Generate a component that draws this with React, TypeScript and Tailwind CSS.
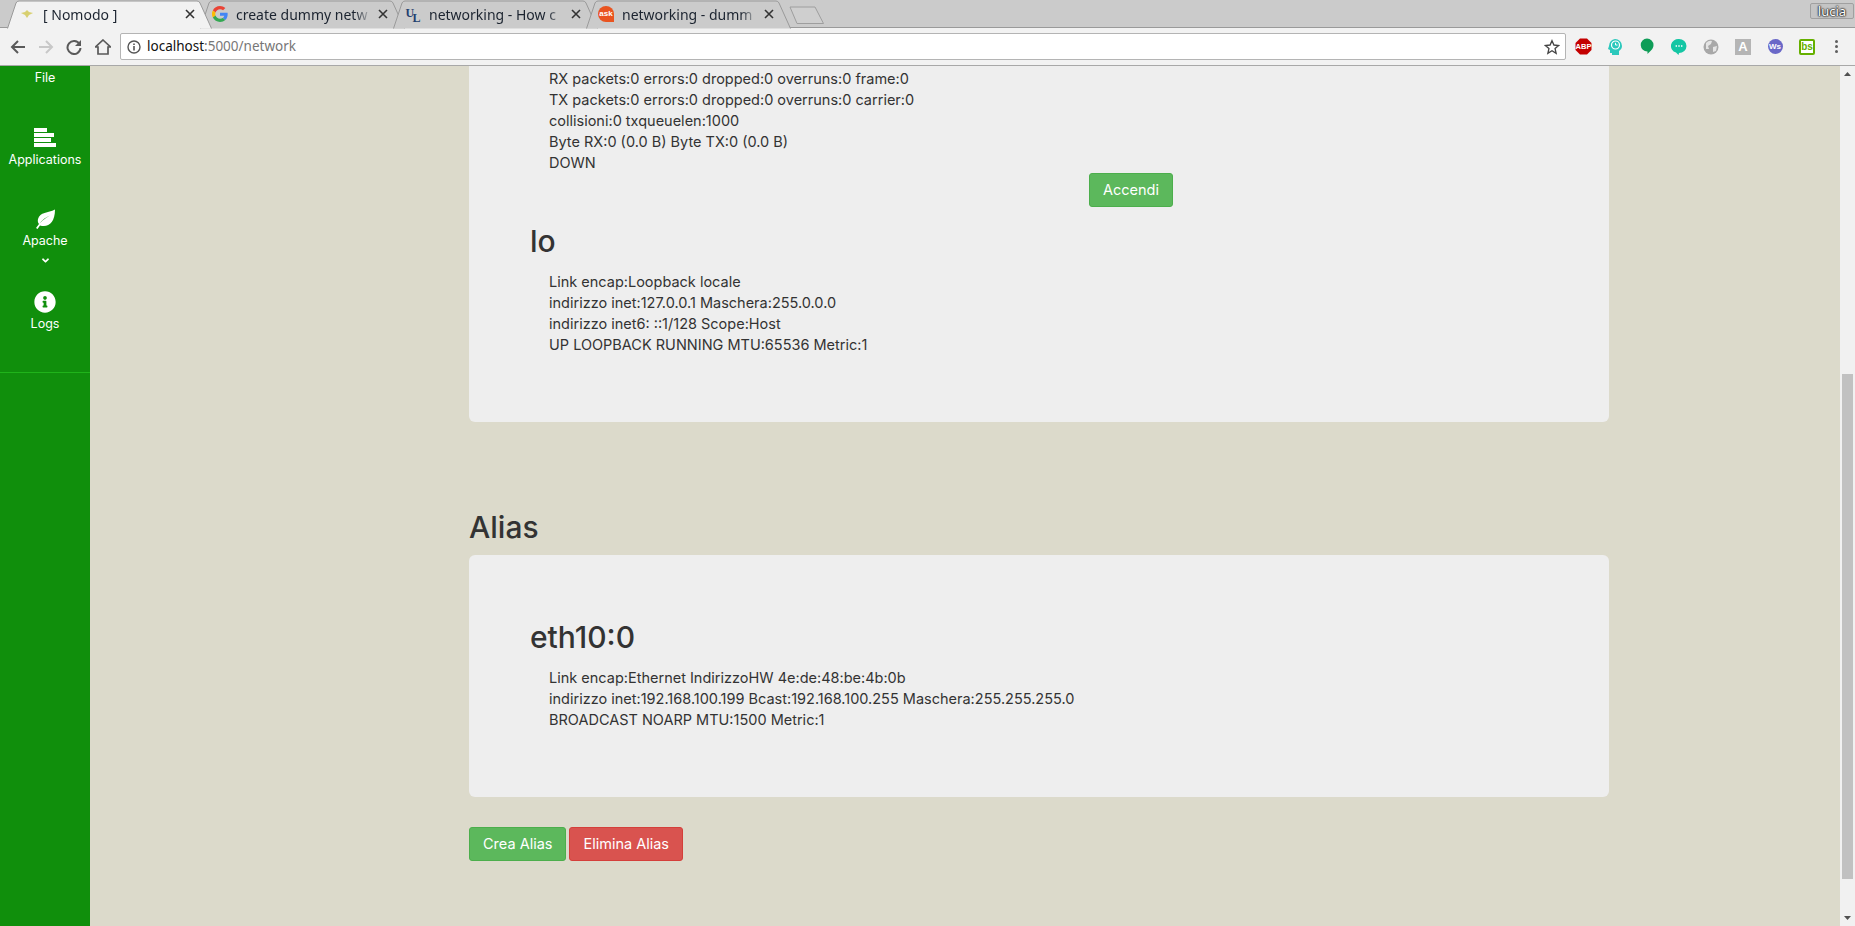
import React from "react";
import { FaInfoCircle, FaAngleDown } from "react-icons/fa";

const font = "font-['Inter','Liberation_Sans',sans-serif]";

function Tab({
  title,
  icon,
  active
}: {
  title: string;
  icon: React.ReactNode;
  active?: boolean;
}) {
  return (
    <div className={`relative h-[28px] w-[205px] shrink-0 -mr-[12px] ${active ? "z-10" : ""}`}>
      <svg className="absolute inset-0" width="205" height="29" viewBox="0 0 205 29">
        <path
          d="M0.5 28.5 L9 3 Q10 1 12 1 L190 1 Q192 1 193 3 L204.5 28.5"
          fill={active ? "#f2f2f2" : "#cbcbcb"}
          stroke="#9a9a9a"
        />
      </svg>
      <div className="relative flex h-full items-center pl-[12px] pr-[17px]">
        <span className="flex w-[16px] shrink-0 justify-center">{icon}</span>
        <span className="flex-1 overflow-hidden whitespace-nowrap pl-[8px] text-[14px] text-[#1c2430] [mask-image:linear-gradient(90deg,#000_88%,transparent)] font-['Noto_Sans',sans-serif]">
          {title}
        </span>
        <svg className="ml-[6px] shrink-0" width="10" height="10" viewBox="0 0 10 10">
          <path d="M1 1 L9 9 M9 1 L1 9" stroke="#333" strokeWidth="1.6" />
        </svg>
      </div>
    </div>
  );
}

function Extension({ children }: { children: React.ReactNode }) {
  return <div className="flex h-[18px] w-[32px] items-center justify-center">{children}</div>;
}

function Toolbar() {
  return (
    <div className="flex h-[38px] items-center border-b border-[#a8a8a8] bg-[#f2f2f2]">
      <div className="flex w-[120px] shrink-0 items-center pl-[10px]">
        <svg width="16" height="16" viewBox="0 0 16 16" className="mr-[12px]">
          <path d="M15 8 H2 M8 2 L2 8 L8 14" fill="none" stroke="#5a5a5a" strokeWidth="2" />
        </svg>
        <svg width="16" height="16" viewBox="0 0 16 16" className="mr-[12px]">
          <path d="M1 8 H14 M8 2 L14 8 L8 14" fill="none" stroke="#c8c8c8" strokeWidth="2" />
        </svg>
        <svg width="16" height="16" viewBox="0 0 16 16" className="mr-[13px]">
          <path d="M13.5 5 A6.5 6.5 0 1 0 14.5 9" fill="none" stroke="#5a5a5a" strokeWidth="2" />
          <path d="M15 1 V7 H9 Z" fill="#5a5a5a" />
        </svg>
        <svg width="16" height="16" viewBox="0 0 16 16">
          <path d="M8 1 L15.5 8 H13 V15 H3 V8 H0.5 Z" fill="none" stroke="#5a5a5a" strokeWidth="1.7" />
        </svg>
      </div>
      <div className="flex h-[27px] w-[1446px] shrink-0 items-center rounded-[2px] border border-[#b4b4b4] bg-white pl-[6px] pr-[5px]">
        <svg width="14" height="14" viewBox="0 0 14 14">
          <circle cx="7" cy="7" r="6" fill="none" stroke="#555" strokeWidth="1.4" />
          <path d="M7 6 V10.5 M7 3.4 V5" stroke="#555" strokeWidth="1.6" />
        </svg>
        <span className="ml-[6px] flex-1 text-[13.5px] text-[#777] font-['Noto_Sans',sans-serif]">
          <span className="text-[#111]">localhost</span>:5000/network
        </span>
        <svg width="16" height="16" viewBox="0 0 24 24">
          <path
            d="M12 2.5 L14.9 9 L22 9.7 L16.6 14.4 L18.2 21.4 L12 17.7 L5.8 21.4 L7.4 14.4 L2 9.7 L9.1 9 Z"
            fill="none"
            stroke="#444"
            strokeWidth="2"
          />
        </svg>
      </div>
      <div className="flex flex-1 items-center pl-[1px]">
        <Extension>
          <svg width="17" height="17" viewBox="0 0 17 17">
            <path d="M5 0.5 H12 L16.5 5 V12 L12 16.5 H5 L0.5 12 V5 Z" fill="#c40000" />
            <text x="8.5" y="11" textAnchor="middle" fontSize="7.5" fontWeight="700" fill="#fff" fontFamily="Liberation Sans">ABP</text>
          </svg>
        </Extension>
        <Extension>
          <svg width="16" height="18" viewBox="0 0 16 18">
            <path d="M8 1 A7 7 0 0 1 15 8 C15 11 13 12 12 13 V17 H5 V15 H3 V12 L1 11 L2 8 A7 7 0 0 1 8 1 Z" fill="#2cc8bc" />
            <circle cx="8.5" cy="7" r="4" fill="none" stroke="#fff" strokeWidth="1.2" />
            <path d="M8.5 4.8 V7 H10.5" fill="none" stroke="#fff" strokeWidth="1" />
          </svg>
        </Extension>
        <Extension>
          <svg width="14" height="18" viewBox="0 0 14 18">
            <path d="M7 0.5 A6.5 6.5 0 0 1 13.5 7 C13.5 11 10 13.5 7.5 16 V13.5 A6.5 6.5 0 0 1 7 0.5 Z" fill="#0f9d58" />
          </svg>
        </Extension>
        <Extension>
          <svg width="16" height="18" viewBox="0 0 16 18">
            <path d="M8 1 A7.5 7 0 0 1 8 15 L7.5 17 L5 14.6 A7.5 7 0 0 1 8 1 Z" fill="#14c6a4" />
            <path d="M4.6 8 H6 M7.3 8 H8.7 M10 8 H11.4" stroke="#fff" strokeWidth="1.3" />
          </svg>
        </Extension>
        <Extension>
          <svg width="16" height="16" viewBox="0 0 16 16">
            <circle cx="8" cy="8" r="7.5" fill="#a8a8a8" />
            <path d="M3 4 Q6 1 9 2 L8 5 L5 7 L6 10 L3 10 Z M10 8 L14 7 L13 12 L10 13 Z" fill="#e4e4e4" />
          </svg>
        </Extension>
        <Extension>
          <div className="flex h-[16px] w-[16px] items-center justify-center bg-[#b5b5b5] text-[13px] font-semibold text-white font-['Liberation_Sans',sans-serif]">A</div>
        </Extension>
        <Extension>
          <div className="flex h-[15px] w-[15px] items-center justify-center rounded-full bg-[#6a68c8] text-[8px] font-bold text-white font-['Liberation_Sans',sans-serif]">Ws</div>
        </Extension>
        <Extension>
          <div className="flex h-[16px] w-[16px] items-center justify-center rounded-[2px] border-2 border-[#66b000] bg-white text-[10px] font-bold leading-none text-[#66b000] font-['Liberation_Sans',sans-serif]">bs</div>
        </Extension>
        <div className="ml-[12px] flex flex-col gap-[2px]">
          <span className="h-[3px] w-[3px] rounded-full bg-[#5f5f5f]" />
          <span className="h-[3px] w-[3px] rounded-full bg-[#5f5f5f]" />
          <span className="h-[3px] w-[3px] rounded-full bg-[#5f5f5f]" />
        </div>
      </div>
    </div>
  );
}

function BrowserChrome() {
  return (
    <div className="shrink-0">
      <div className="relative flex h-[28px] border-b border-[#9a9a9a] bg-[#cbcbcb] pl-[7px]">
        <Tab
          active
          title="[ Nomodo ]"
          icon={
            <svg width="14" height="8" viewBox="0 0 14 8">
              <path d="M1 3 L5 2 L7 0 L9 2 L13 3 L9 5 L7 8 L5 5 Z" fill="#d8d070" />
            </svg>
          }
        />
        <Tab
          title="create dummy netw"
          icon={
            <svg width="16" height="16" viewBox="0 0 48 48">
              <path fill="#EA4335" d="M24 9.5c3.5 0 6.7 1.3 9.2 3.6l6.9-6.9C35.9 2.4 30.4 0 24 0 14.6 0 6.5 5.4 2.6 13.2l8 6.2C12.5 13.7 17.8 9.5 24 9.5z" />
              <path fill="#4285F4" d="M47 24.5c0-1.6-.1-3.1-.4-4.5H24v9h12.9c-.6 3-2.2 5.5-4.7 7.2l7.7 6C44.4 37.9 47 31.8 47 24.5z" />
              <path fill="#FBBC05" d="M10.5 28.6A14.5 14.5 0 0 1 10.5 19.4l-8-6.2a24 24 0 0 0 0 21.600z" />
              <path fill="#34A853" d="M24 48c6.5 0 11.9-2.1 15.9-5.8l-7.7-6c-2.2 1.5-4.9 2.3-8.2 2.3-6.2 0-11.5-4.2-13.4-9.9l-8 6.2C6.5 42.6 14.6 48 24 48z" />
            </svg>
          }
        />
        <Tab
          title="networking - How c"
          icon={
            <span className="relative h-[15px] w-[15px] text-[12px] font-bold leading-none text-[#24406e] font-['Liberation_Serif',serif]">
              <span className="absolute left-0 top-0">U</span>
              <span className="absolute left-[7px] top-[5px]">L</span>
            </span>
          }
        />
        <Tab
          title="networking - dumm"
          icon={
            <span className="flex h-[16px] w-[16px] items-center justify-center rounded-full rounded-br-none bg-[#e95420] text-[8px] font-bold text-white font-['Liberation_Sans',sans-serif]">
              ask
            </span>
          }
        />
        <svg className="ml-[10px] mt-[6px]" width="36" height="19" viewBox="0 0 36 19">
          <path d="M1 1 H26 L34.5 17.5 H8 Z" fill="#cfcfcf" stroke="#9e9e9e" />
        </svg>
        <div className="absolute right-[1px] top-[3px] flex h-[16px] w-[44px] items-center justify-center rounded-[2px] border border-[#a0a0a0] bg-[#c4c4c4] text-[13px] leading-none text-white [text-shadow:0_0_1px_#111,0_0_2px_#111,0_0_2px_#111] font-['Noto_Sans',sans-serif]">
          lucia
        </div>
      </div>
      <Toolbar />
    </div>
  );
}

function SideItem({ icon, label }: { icon: React.ReactNode; label: string }) {
  return (
    <div className="flex flex-col items-center">
      <div className="flex h-[22px] items-center text-[22px]">{icon}</div>
      <div className="mt-[2px] text-[12.5px] leading-[18px]">{label}</div>
    </div>
  );
}

function Sidebar() {
  return (
    <div className="flex w-[90px] shrink-0 flex-col bg-[#108f0c] text-white">
      <div className="pt-[3px] text-center text-[12.5px] leading-[18px]">File</div>
      <div className="mt-[40px]">
        <SideItem
          icon={
            <svg width="22" height="20" viewBox="0 0 22 20" fill="#fff">
              <rect y="0" width="13" height="4" />
              <rect y="5" width="20" height="4" />
              <rect y="10" width="17" height="4" />
              <rect y="15" width="22" height="4" />
            </svg>
          }
          label="Applications"
        />
      </div>
      <div className="mt-[39px]">
        <SideItem
          icon={
            <svg width="22" height="20" viewBox="0 0 22 20" fill="#fff">
              <path d="M21 0.5 C14 4 6 3 4 10 C3.5 12 4 14 5 15 C8 11 12 8 16 6.5 C11 9 6 13 2 19 L3.5 20 L6 16.5 C14 19 21 14 21 0.5 Z" />
            </svg>
          }
          label="Apache"
        />
        <div className="mt-[5px] flex justify-center text-[11px]">
          <FaAngleDown />
        </div>
      </div>
      <div className="mt-[25px]">
        <SideItem icon={<FaInfoCircle />} label="Logs" />
      </div>
      <div className="mt-[39px] border-b border-[#1fb31a]" />
    </div>
  );
}

function Info({ lines }: { lines: string[] }) {
  return (
    <div className="pl-[19px] text-[14.5px] leading-[21px]">
      {lines.map((line) => (
        <div key={line}>{line}</div>
      ))}
    </div>
  );
}

function Button({ label, color }: { label: string; color: "green" | "red" }) {
  return (
    <button
      className={`h-[34px] rounded-[3px] border px-[13px] text-[14.5px] text-white ${
        color === "green" ? "border-[#4cae4c] bg-[#5cb85c]" : "border-[#d43f3a] bg-[#d9534f]"
      }`}
    >
      {label}
    </button>
  );
}

export default function App() {
  return (
    <div className={`flex h-[926px] w-[1855px] flex-col overflow-hidden ${font}`}>
      <BrowserChrome />
      <div className="flex min-h-0 flex-1">
        <Sidebar />
        <div className="min-w-0 flex-1 bg-[#dcdacb] pl-[379px] text-[#333]">
          <div className="w-[1140px]">
            <div className="rounded-b-[6px] bg-[#eeeeee] pb-[67px] pl-[61px] pt-[2px]">
              <Info
                lines={[
                  "RX packets:0 errors:0 dropped:0 overruns:0 frame:0",
                  "TX packets:0 errors:0 dropped:0 overruns:0 carrier:0",
                  "collisioni:0 txqueuelen:1000",
                  "Byte RX:0 (0.0 B) Byte TX:0 (0.0 B)",
                  "DOWN"
                ]}
              />
              <div className="ml-[559px]">
                <Button label="Accendi" color="green" />
              </div>
              <h2 className="mt-[18px] text-[30px] font-medium leading-[33px]">lo</h2>
              <div className="mt-[13px]">
                <Info
                  lines={[
                    "Link encap:Loopback locale",
                    "indirizzo inet:127.0.0.1 Maschera:255.0.0.0",
                    "indirizzo inet6: ::1/128 Scope:Host",
                    "UP LOOPBACK RUNNING MTU:65536 Metric:1"
                  ]}
                />
              </div>
            </div>
            <h2 className="mt-[89px] text-[30px] font-medium leading-[33px]">Alias</h2>
            <div className="mt-[11px] rounded-[6px] bg-[#eeeeee] pb-[67px] pl-[61px] pt-[66px]">
              <h2 className="text-[30px] font-medium leading-[33px]">eth10:0</h2>
              <div className="mt-[13px]">
                <Info
                  lines={[
                    "Link encap:Ethernet IndirizzoHW 4e:de:48:be:4b:0b",
                    "indirizzo inet:192.168.100.199 Bcast:192.168.100.255 Maschera:255.255.255.0",
                    "BROADCAST NOARP MTU:1500 Metric:1"
                  ]}
                />
              </div>
            </div>
            <div className="mt-[30px] flex gap-[3px]">
              <Button label="Crea Alias" color="green" />
              <Button label="Elimina Alias" color="red" />
            </div>
          </div>
        </div>
        <div className="flex w-[15px] shrink-0 flex-col items-center bg-[#f1f1f1]">
          <svg className="mt-[6px]" width="7" height="4" viewBox="0 0 7 4">
            <path d="M3.5 0 L7 4 H0 Z" fill="#505050" />
          </svg>
          <div className="mt-[298px] h-[505px] w-[11px] bg-[#c1c1c1]" />
          <svg className="mt-[37px]" width="7" height="4" viewBox="0 0 7 4">
            <path d="M0 0 H7 L3.5 4 Z" fill="#505050" />
          </svg>
        </div>
      </div>
    </div>
  );
}
